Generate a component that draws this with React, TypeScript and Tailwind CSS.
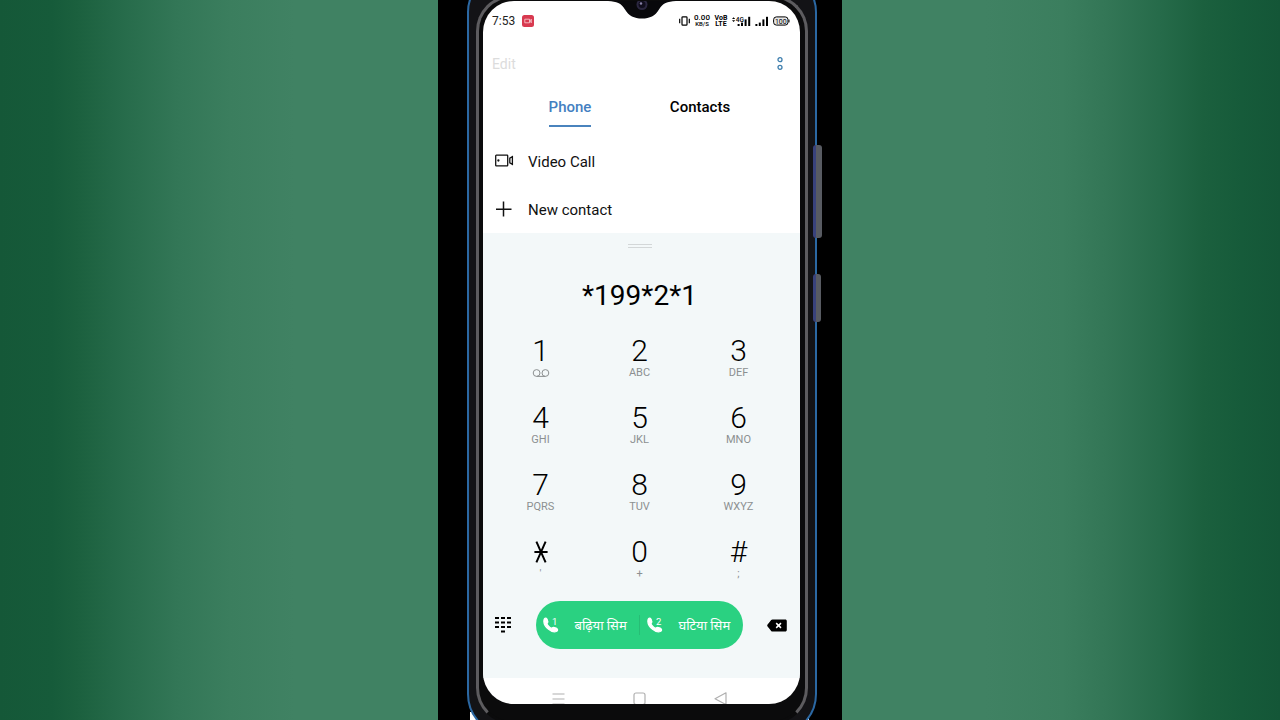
import { useState } from "react";

const keys = [
    { digit: "1", letters: "voicemail" },
    { digit: "2", letters: "ABC" },
    { digit: "3", letters: "DEF" },
    { digit: "4", letters: "GHI" },
    { digit: "5", letters: "JKL" },
    { digit: "6", letters: "MNO" },
    { digit: "7", letters: "PQRS" },
    { digit: "8", letters: "TUV" },
    { digit: "9", letters: "WXYZ" },
    { digit: "*", letters: "'" },
    { digit: "0", letters: "+" },
    { digit: "#", letters: ";" },
];

const sims = [
    { slot: "1", name: "बढ़िया सिम" },
    { slot: "2", name: "घटिया सिम" },
];

function StatusIcons() {
    return (
        <div className="flex items-center gap-1 text-black">
            {/* Vibrate */}
            <svg width="11" height="10" viewBox="0 0 11 10" fill="none" stroke="currentColor" strokeWidth="1.2">
                <rect x="3" y="0.8" width="5" height="8.4" rx="0.8" />
                <path d="M0.7 2.8v4.4M10.3 2.8v4.4" />
            </svg>
            <div className="flex w-4 flex-col items-center font-medium">
                <span className="text-[8px] leading-[6px]">0.00</span>
                <span className="text-[6px] leading-[6px]">KB/S</span>
            </div>
            <div className="flex w-[14px] flex-col items-center font-bold">
                <span className="text-[7px] leading-[6px]">VoB</span>
                <span className="text-[7px] leading-[6px]">LTE</span>
            </div>
            {/* 4G signal */}
            <svg width="19" height="11" viewBox="0 0 19 11" fill="currentColor">
                <path d="M0 3 1.6 1.2 3.2 3zM0 4.2h3.2L1.6 6z" />
                <text x="3.8" y="5.8" fontSize="6.5" fontWeight="500">4G</text>
                <rect x="5.6" y="8" width="2" height="2" />
                <rect x="9" y="6.6" width="2" height="3.4" />
                <rect x="12.6" y="3.4" width="2" height="6.6" />
                <rect x="16.2" y="0.8" width="2" height="9.2" />
            </svg>
            <svg width="14" height="11" viewBox="0 0 14 11" fill="currentColor">
                <rect x="0.4" y="8" width="2" height="2" />
                <rect x="3.8" y="6.6" width="2" height="3.4" />
                <rect x="7.4" y="3.4" width="2" height="6.6" />
                <rect x="11" y="0.8" width="2" height="9.2" />
            </svg>
            {/* Battery */}
            <svg width="17" height="10" viewBox="0 0 17 10">
                <rect x="0.6" y="0.9" width="14.4" height="8.2" rx="2.8" fill="#e6e6e6" stroke="currentColor" strokeWidth="1" />
                <path d="M16 3.6v2.8" stroke="currentColor" strokeWidth="1" />
                <text x="7.8" y="7.5" fontSize="7" textAnchor="middle" fill="currentColor">100</text>
            </svg>
        </div>
    );
}

function StarIcon() {
    return (
        <svg width="14" height="22" viewBox="0 0 14 22" fill="none" stroke="currentColor" strokeWidth="2">
            <path d="M2.4 0.6 11.6 21.4M11.6 0.6 2.4 21.4M0.4 11h13.2" />
        </svg>
    );
}

function VoicemailIcon() {
    return (
        <svg width="18" height="9" viewBox="0 0 18 9" fill="none" stroke="currentColor" strokeWidth="1">
            <circle cx="4.6" cy="4" r="3.4" />
            <circle cx="13.4" cy="4" r="3.4" />
            <path d="M4.6 7.4h8.8" />
        </svg>
    );
}

function CallIcon({ slot }: { slot: string }) {
    return (
        <svg width="16" height="16" viewBox="0 0 16 16" fill="currentColor" aria-hidden="true">
            <path
                d="M1.4 1.8C1.9 1.2 2.7 1 3.4 1.3c.7.3 1.2 2.3 1.4 3.3.2.9-.8 1.5-.8 2.1 0 1 2.8 4.2 4.2 4.5.8.1 1.500-.8 2.300-.7 1.200.2 3.400.8 3.800 1.600.4.8-.2 2-1 2.400-2 .9-5-.1-7.700-2.300C2.700 10 1 6.900.9 4.600.9 3.600.9 2.400 1.400 1.800z"
                stroke="currentColor"
                strokeWidth="1.3"
            />
            <text x="9" y="7.8" fontSize="9.5">{slot}</text>
        </svg>
    );
}

export default function App() {
    const [number, setNumber] = useState("*199*2*1");

    return (
        <main className="flex min-h-screen justify-center overflow-hidden bg-[linear-gradient(90deg,#155838_0%,#165b3a_4%,#1b603e_6%,#266b4a_9.5%,#337757_14%,#3b7e5e_18%,#408263_23%,#408263_77%,#3b7e5e_83%,#337656_86.5%,#266b4a_90.5%,#1b603e_94%,#165b3a_97%,#145637_100%)] font-[Roboto,'Noto_Sans',sans-serif]">
            <div className="flex w-[404px] shrink-0 items-start overflow-hidden bg-black pl-[29px]">
                <div className="relative isolate -mt-[26px] -mb-4 w-[350px]">
                    {/* Light patches left behind the bottom corners */}
                    <div className="absolute bottom-0 left-[3px] -z-10 h-6 w-3 bg-white" />
                    <div className="absolute right-2 bottom-0 -z-10 h-5 w-2 bg-white" />

                    <div className="rounded-t-[38px] rounded-b-[42px] border-2 border-[#2b68a3] bg-[#131316] px-[7px] pt-[19px] pb-[10px]">
                        <div className="rounded-[36px] border-[3px] border-[#5d5c5f] border-b-[#0b0b0c] bg-[#0b0b0c] pt-[3px] pr-[5px] pb-[17px] pl-1">
                            <div className="relative overflow-hidden rounded-[31px] bg-white">
                                {/* Notch */}
                                <svg className="absolute top-0 left-1/2 -translate-x-1/2" width="68" height="19" viewBox="0 0 68 19">
                                    <path d="M0 0C9 .5 13 2 17 8.5 21 15 26 17.5 34 17.5S47 15 51 8.5C55 2 59 .5 68 0z" fill="#08080b" />
                                    <circle cx="34" cy="3.5" r="5.5" fill="#2b2740" />
                                    <circle cx="34" cy="3.5" r="3.5" fill="#100d1c" />
                                    <circle cx="33" cy="2.5" r="1.2" fill="#8a83a8" />
                                </svg>

                                {/* Status bar */}
                                <header className="flex h-10 items-center justify-between pr-[10px] pl-[9px]">
                                    <div className="flex items-center gap-[7px]">
                                        <span className="text-xs text-[#222]">7:53</span>
                                        <svg width="12" height="12" viewBox="0 0 12 12">
                                            <rect width="12" height="12" rx="2.5" fill="#d83a50" />
                                            <path d="M2.8 4.2h4.7v3.6H2.8zM9.3 4.2v3.6L7.9 6z" fill="none" stroke="#fbd3d8" strokeWidth="0.8" />
                                        </svg>
                                    </div>
                                    <StatusIcons />
                                </header>

                                <div className="flex h-[46px] items-center justify-between pr-4 pl-[9px]">
                                    <button type="button" className="text-sm text-[#dcdcdc]">Edit</button>
                                    <button type="button" aria-label="More options">
                                        <svg width="8" height="14" viewBox="0 0 8 14" fill="none" stroke="#3f7fae" strokeWidth="1.3">
                                            <circle cx="4" cy="2.7" r="2" />
                                            <circle cx="4" cy="10.3" r="2" />
                                        </svg>
                                    </button>
                                </div>

                                {/* Tabs */}
                                <nav className="grid h-10 grid-cols-2 justify-items-center pr-[35px] pl-[22px] text-[15px] font-medium">
                                    <button type="button" className="border-b-2 border-[#4a83bd] pt-[2px] text-[#447fc1]">Phone</button>
                                    <button type="button" className="border-b-2 border-transparent pt-[2px] text-black">Contacts</button>
                                </nav>

                                <div className="pt-[10px] text-[15px] text-[#111]">
                                    <button type="button" className="flex h-12 w-full items-center gap-[14px] pl-3">
                                        <svg width="19" height="14" viewBox="0 0 19 14" fill="none" stroke="currentColor" strokeWidth="1.3">
                                            <rect x="0.7" y="1.2" width="12" height="10.6" rx="0.6" />
                                            <path d="M17.4 2.6v7.8l-2.6-1.6V4.2z" />
                                            <circle cx="3.4" cy="6.5" r="0.5" fill="currentColor" />
                                        </svg>
                                        <span className="pt-[2px]">Video Call</span>
                                    </button>
                                    <button type="button" className="flex h-12 w-full items-center gap-[14px] pl-3">
                                        <svg width="19" height="16" viewBox="0 0 19 16" fill="none" stroke="currentColor" strokeWidth="1.5">
                                            <path d="M8.5 .5v15M1 8.3h15.5" />
                                        </svg>
                                        <span className="pt-[2px]">New contact</span>
                                    </button>
                                </div>

                                {/* Dial pad */}
                                <section className="bg-[#f3f8f9] pt-[11px] pr-3 pb-[29px] pl-2">
                                    <div className="mx-auto h-1 w-6 border-y border-[#d3d7d8]" />
                                    <input
                                        type="tel"
                                        aria-label="Number"
                                        value={number}
                                        onChange={(e) => setNumber(e.target.value)}
                                        className="mt-7 block h-10 w-full bg-transparent text-center text-[28px] text-black outline-none"
                                    />

                                    <div className="mt-[19px] grid grid-cols-3 gap-y-[23px]">
                                        {keys.map((key) => (
                                            <button
                                                key={key.digit}
                                                type="button"
                                                aria-label={key.digit}
                                                onClick={() => setNumber(number + key.digit)}
                                                className="flex h-11 flex-col items-center"
                                            >
                                                <span className="flex h-8 items-center text-[30px] leading-8 font-light text-black">
                                                    {key.digit === "*" ? <StarIcon /> : key.digit}
                                                </span>
                                                <span className="flex h-3 items-center text-[11px] leading-3 text-[#8c9091]">
                                                    {key.letters === "voicemail" ? <VoicemailIcon /> : key.letters}
                                                </span>
                                            </button>
                                        ))}
                                    </div>

                                    <div className="mt-[21px] flex items-center justify-between pr-[1px] pl-1">
                                        <button type="button" aria-label="Hide keypad">
                                            <svg width="16" height="16" viewBox="0 0 16 16" fill="currentColor">
                                                <path d="M0 0h4v2H0zM6 0h4v2H6zM12 0h4v2h-4zM0 4.5h4v2H0zM6 4.5h4v2H6zM12 4.5h4v2h-4zM0 9h4v2H0zM6 9h4v2H6zM12 9h4v2h-4zM6 13.5h4v2H6z" />
                                            </svg>
                                        </button>
                                        <div className="flex h-12 w-[207px] items-center divide-x divide-[#27bd75] rounded-full bg-[#2ad181] text-white">
                                            {sims.map((sim) => (
                                                <button key={sim.slot} type="button" className="flex h-5 flex-1 items-center gap-4 pl-[7px] text-[13px] leading-5 whitespace-nowrap">
                                                    <CallIcon slot={sim.slot} />
                                                    <span className="pt-[2px]">{sim.name}</span>
                                                </button>
                                            ))}
                                        </div>
                                        <button type="button" aria-label="Delete" onClick={() => setNumber(number.slice(0, -1))}>
                                            <svg width="20" height="13" viewBox="0 0 20 13">
                                                <path d="M5.5.5h12.7c1 0 1.6.6 1.6 1.5v9c0 .9-.6 1.5-1.6 1.5H5.5c-.6 0-1-.2-1.3-.6L.4 7.2c-.3-.4-.3-1 0-1.4l3.8-4.7c.3-.4.7-.6 1.3-.6z" />
                                                <path d="m9.2 4.1 4.8 4.8M14 4.1 9.2 8.9" stroke="#fff" strokeWidth="1.5" />
                                            </svg>
                                        </button>
                                    </div>
                                </section>

                                {/* System navigation, cut off by the bottom edge */}
                                <footer className="flex h-[26px] items-end justify-between pr-[73px] pl-[69px] text-[#b0b0b0]">
                                    <button type="button" aria-label="Recent apps">
                                        <svg width="13" height="12" viewBox="0 0 13 12" fill="none" stroke="currentColor" strokeWidth="1.2">
                                            <path d="M.5 2h12M.5 7h12M.5 12h12" />
                                        </svg>
                                    </button>
                                    <button type="button" aria-label="Home">
                                        <svg width="13" height="12" viewBox="0 0 13 12" fill="none" stroke="currentColor" strokeWidth="1.2">
                                            <rect x="1" y="1" width="11" height="11.5" rx="2" />
                                        </svg>
                                    </button>
                                    <button type="button" aria-label="Back">
                                        <svg width="13" height="12" viewBox="0 0 13 12" fill="none" stroke="currentColor" strokeWidth="1.2" strokeLinejoin="round">
                                            <path d="M12 .8v11.8L1 6.7z" />
                                        </svg>
                                    </button>
                                </footer>
                            </div>
                        </div>
                    </div>

                    {/* Volume and power buttons */}
                    <div className="absolute top-[171px] -right-[5px] h-[93px] w-[9px] rounded-[3px] border-l-[3px] border-[#39427c] bg-[#585b62]" />
                    <div className="absolute top-[300px] -right-1 h-12 w-2 rounded-[3px] border-l-[3px] border-[#39427c] bg-[#585b62]" />
                </div>
            </div>
        </main>
    );
}
